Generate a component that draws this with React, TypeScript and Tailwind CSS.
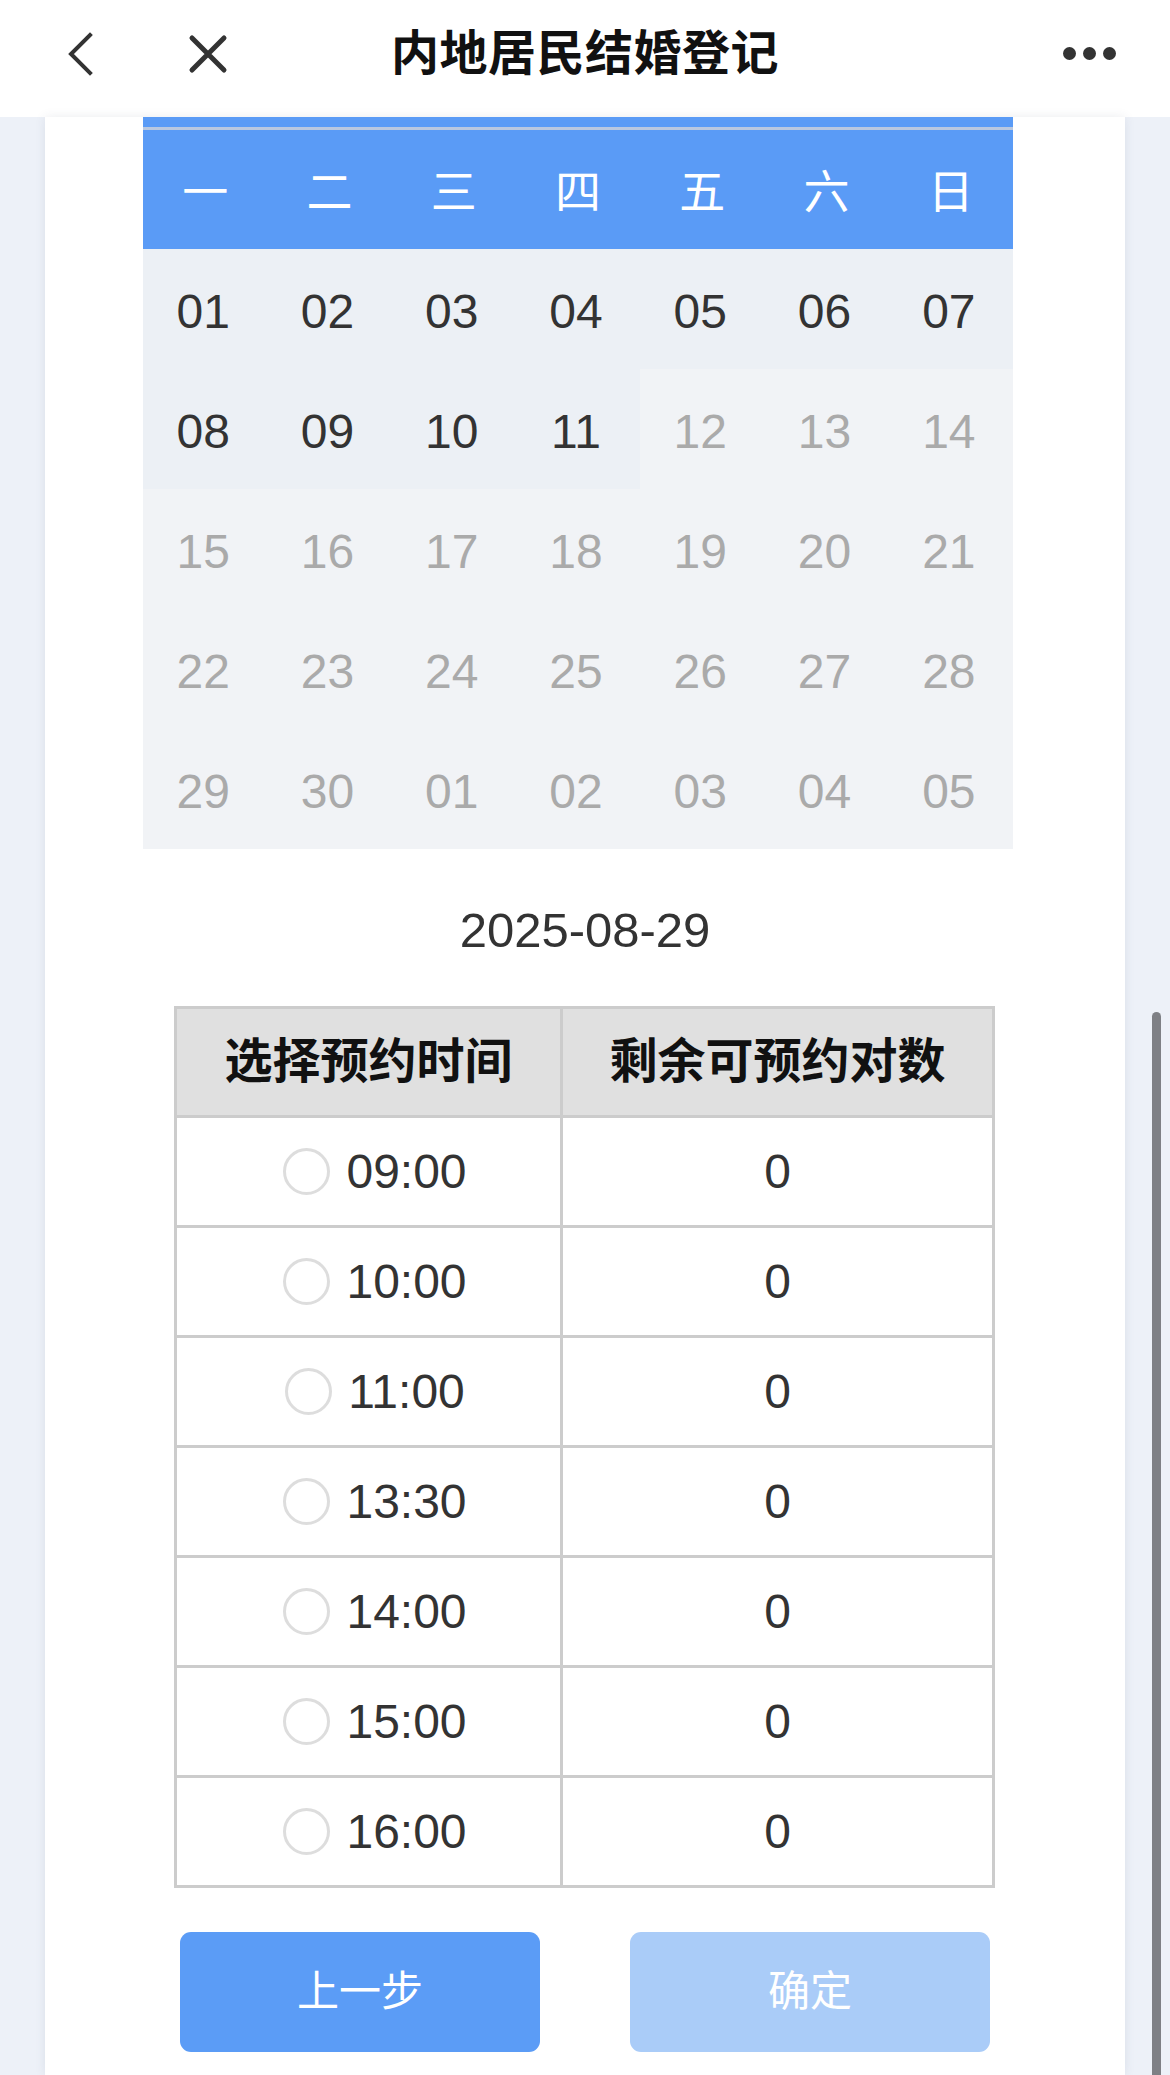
import { useState } from "react";

const weekDays = ["一", "二", "三", "四", "五", "六", "日"];

const weeks: { label: string; active: boolean }[][] = [
  ["01", "02", "03", "04", "05", "06", "07"].map((d) => ({ label: d, active: true })),
  ["08", "09", "10", "11", "12", "13", "14"].map((d, i) => ({ label: d, active: i < 4 })),
  ["15", "16", "17", "18", "19", "20", "21"].map((d) => ({ label: d, active: false })),
  ["22", "23", "24", "25", "26", "27", "28"].map((d) => ({ label: d, active: false })),
  ["29", "30", "01", "02", "03", "04", "05"].map((d) => ({ label: d, active: false })),
];

const slots = ["09:00", "10:00", "11:00", "13:30", "14:00", "15:00", "16:00"];

export default function App() {
  const [selected, setSelected] = useState<string | null>(null);

  return (
    <div className="relative w-[1170px] h-[2075px] overflow-hidden bg-[#edf1f8] font-['Liberation_Sans','Noto_Sans_CJK_SC',sans-serif] text-[#333]">
      {/* Top bar */}
      <div className="h-[117px] pb-[10px] bg-white grid grid-cols-[1fr_auto_1fr] items-center">
        <div className="flex items-center pl-[67px]">
          <svg width="28" height="46" viewBox="0 0 28 46" fill="none">
            <polyline points="23,4 4,23 23,42" stroke="#333" strokeWidth="4" strokeLinecap="square" strokeLinejoin="miter" />
          </svg>
          <svg className="ml-[93px]" width="40" height="40" viewBox="0 0 40 40" fill="none">
            <path d="M4 4 L36 36 M36 4 L4 36" stroke="#333" strokeWidth="5" strokeLinecap="round" />
          </svg>
        </div>
        <div className="text-[48px] font-bold leading-none text-[#111] tracking-[0.5px]">内地居民结婚登记</div>
        <div className="flex items-center justify-end gap-[7px] pr-[54px]">
          <span className="w-[13px] h-[13px] rounded-full bg-[#333]" />
          <span className="w-[13px] h-[13px] rounded-full bg-[#333]" />
          <span className="w-[13px] h-[13px] rounded-full bg-[#333]" />
        </div>
      </div>

      {/* Card */}
      <div className="mx-[45px] h-[1958px] bg-white shadow-[0_0_10px_rgba(60,70,100,0.10)] flex flex-col">
        {/* Calendar */}
        <div className="ml-[98px] w-[870px]">
          <div className="bg-[#5a9bf6]">
            <div className="h-[10px]" />
            <div className="h-[3px] bg-[#b9c8e0]" />
            <div className="h-[119px] pt-[5px] grid grid-cols-7 items-center">
              {weekDays.map((w) => (
                <div key={w} className="text-center text-white text-[46px] leading-none">
                  {w}
                </div>
              ))}
            </div>
          </div>
          {weeks.map((row, r) => (
            <div key={r} className="grid grid-cols-7 h-[120px]">
              {row.map((c, i) => (
                <div
                  key={i}
                  className={`flex items-center justify-center pr-[4px] pt-[5px] text-[48px] leading-none ${
                    c.active ? "bg-[#ecf0f5] text-[#333]" : "bg-[#f1f3f6] text-[#aaa]"
                  }`}
                >
                  {c.label}
                </div>
              ))}
            </div>
          ))}
        </div>

        {/* Selected date */}
        <div className="h-[157px] pt-[6px] flex items-center justify-center text-[49px] leading-none text-[#333]">
          2025-08-29
        </div>

        {/* Time table */}
        <div className="ml-[129px] w-[821px] border-[3px] border-[#ccc]">
          <div className="grid grid-cols-[383px_3px_1fr] h-[106px] bg-[#e0e0e0]">
            <div className="flex items-center justify-center text-[48px] font-bold leading-none text-[#111]">选择预约时间</div>
            <div className="bg-[#ccc]" />
            <div className="flex items-center justify-center text-[48px] font-bold leading-none text-[#111]">剩余可预约对数</div>
          </div>
          {slots.map((t) => (
            <div key={t} className="border-t-[3px] border-[#ccc] grid grid-cols-[383px_3px_1fr] h-[110px]">
              <button
                onClick={() => setSelected(t)}
                className="flex items-center justify-center gap-[16px] pl-[13px]"
              >
                <span
                  className={`w-[47px] h-[47px] rounded-full border-[3px] ${
                    selected === t ? "border-[#5a9bf6] bg-[#5a9bf6]" : "border-[#ddd] bg-white"
                  }`}
                />
                <span className="text-[48px] leading-none text-[#333]">{t}</span>
              </button>
              <div className="bg-[#ccc]" />
              <div className="flex items-center justify-center text-[48px] leading-none text-[#333]">0</div>
            </div>
          ))}
        </div>

        {/* Actions */}
        <div className="mt-[44px] flex">
          <button className="ml-[135px] w-[360px] h-[120px] rounded-[11px] bg-[#5b9cf6] text-white text-[42px] leading-none">
            上一步
          </button>
          <button className="ml-[90px] w-[360px] h-[120px] rounded-[11px] bg-[#aaccf8] text-white text-[42px] leading-none">
            确定
          </button>
        </div>
      </div>

      {/* Scrollbar */}
      <div className="absolute left-[1152px] top-[1012px] w-[9px] h-[1080px] rounded-full bg-[#7e8085]" />
    </div>
  );
}
